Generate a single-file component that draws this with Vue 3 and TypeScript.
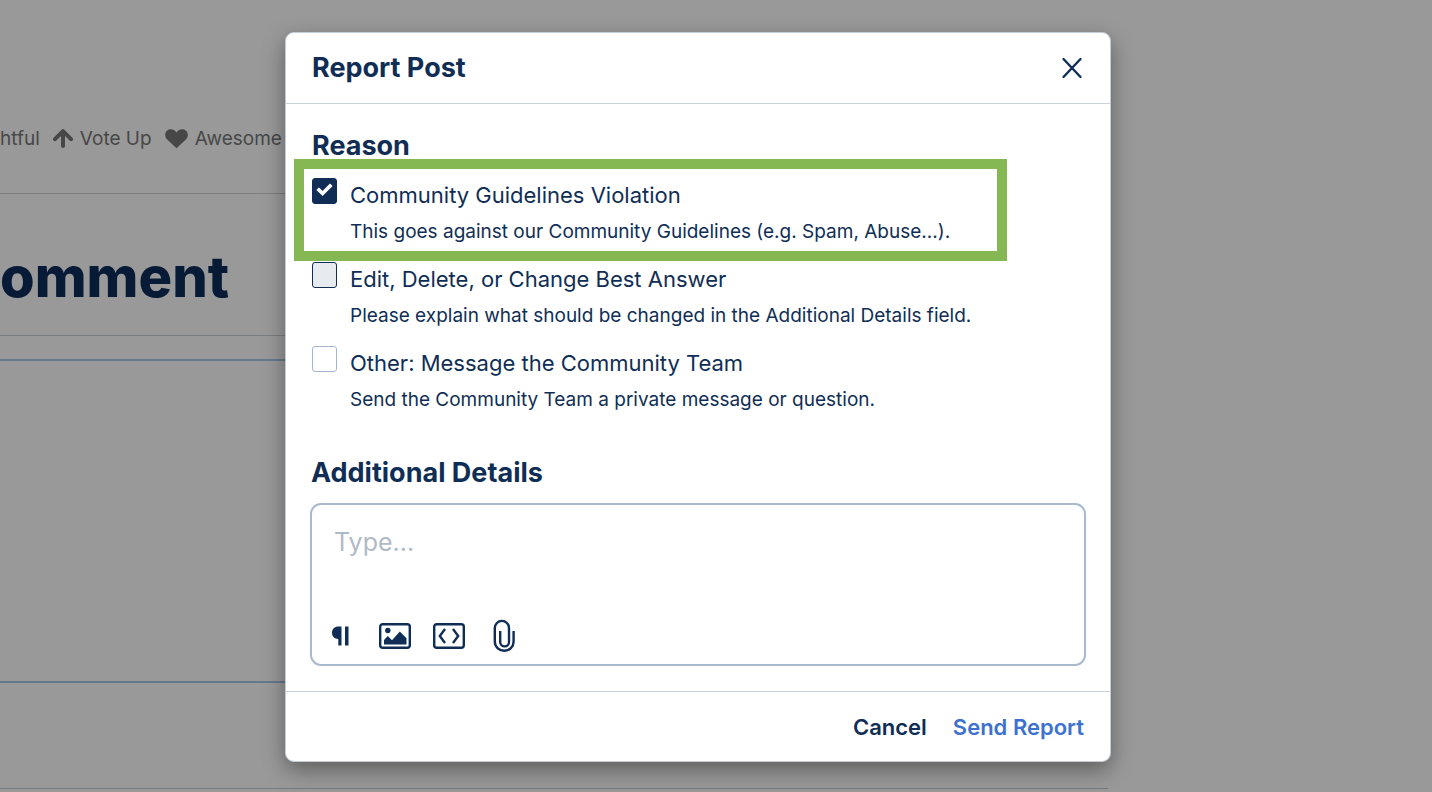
<script setup lang="ts">
import { ref } from 'vue'

interface ReportReason {
  id: string
  title: string
  detail: string
  checked: boolean
  hovered?: boolean
}

const reasons = ref<ReportReason[]>([
  {
    id: 'violation',
    title: 'Community Guidelines Violation',
    detail: 'This goes against our Community Guidelines (e.g. Spam, Abuse...).',
    checked: true,
  },
  {
    id: 'edit',
    title: 'Edit, Delete, or Change Best Answer',
    detail: 'Please explain what should be changed in the Additional Details field.',
    checked: false,
    hovered: true,
  },
  {
    id: 'other',
    title: 'Other: Message the Community Team',
    detail: 'Send the Community Team a private message or question.',
    checked: false,
  },
])

const details = ref('')
</script>

<template>
  <div class="screen">
    <main class="page">
      <div class="reactions">
        <span class="reaction">htful</span>
        <span class="reaction">
          <svg width="20" height="20" viewBox="0 0 20 20" aria-hidden="true">
            <path d="M2 10.2 10 2.2l8 8M10 3.5V17" fill="none" stroke="currentColor" stroke-width="4" stroke-linecap="round" stroke-linejoin="round" />
          </svg>
          Vote Up
        </span>
        <span class="reaction">
          <svg width="23" height="20" viewBox="0 0 23 20" aria-hidden="true">
            <path d="M11.5 19.3 1.9 10.2C-.5 7.7-.3 3.7 2 1.7 4.6-.4 8.2 0 10.4 2.300l1.100 1.200 1.100-1.200C14.800 0 18.400-.4 21 1.700c2.300 2 2.500 6 .1 8.500z" fill="currentColor" />
          </svg>
          Awesome
        </span>
      </div>
      <h1 class="comment-title">omment</h1>
      <div class="comment-box"></div>
      <div class="comment-end"></div>
    </main>

    <div class="overlay">
      <form class="dialog" role="dialog" aria-labelledby="report-title" @submit.prevent>
        <header class="dialog-header">
          <h2 id="report-title">Report Post</h2>
          <button type="button" class="close" aria-label="Close">
            <svg width="22" height="22" viewBox="0 0 22 22" aria-hidden="true">
              <path d="M2.500 2 19.500 20M19.500 2 2.500 20" fill="none" stroke="currentColor" stroke-width="2.400" stroke-linecap="round" />
            </svg>
          </button>
        </header>

        <div class="dialog-body">
          <fieldset>
            <legend>Reason</legend>
            <div class="options">
              <div v-for="reason in reasons" :key="reason.id" class="option">
                <span class="tick">
                  <input :id="reason.id" v-model="reason.checked" type="checkbox" :class="{ hovered: reason.hovered }" />
                  <svg v-if="reason.checked" width="17" height="14" viewBox="0 0 17 14" aria-hidden="true">
                    <path d="M3 7 6.600 10.500 14 3" fill="none" stroke="currentColor" stroke-width="3.700" stroke-linecap="square" />
                  </svg>
                </span>
                <label :for="reason.id">
                  <span class="option-title">{{ reason.title }}</span>
                  <span class="option-detail">{{ reason.detail }}</span>
                </label>
              </div>
              <div class="highlight"></div>
            </div>
          </fieldset>

          <label class="details-label" for="details">Additional Details</label>
          <div class="editor">
            <textarea id="details" v-model="details" placeholder="Type..."></textarea>
            <div class="tools">
              <button type="button" aria-label="Paragraph">
                <svg width="32" height="34" viewBox="0 0 32 34" aria-hidden="true">
                  <path d="M16.500 7.500v19h-3.200V20C9.500 20 7 17.500 7 13.800s2.500-6.300 6.500-6.300zM20 7.500h3.500v19H20z" fill="currentColor" />
                </svg>
              </button>
              <button type="button" aria-label="Image">
                <svg width="32" height="34" viewBox="0 0 32 34" aria-hidden="true">
                  <rect x="1.200" y="5.200" width="29.600" height="23.600" rx="2.500" fill="none" stroke="currentColor" stroke-width="2.400" />
                  <circle cx="8.800" cy="11.500" r="2.700" fill="currentColor" />
                  <path d="M5 25.500v-4.500L8.800 17l4.200 4.200 7.800-8.700 6.700 6.700v6.300z" fill="currentColor" />
                </svg>
              </button>
              <button type="button" aria-label="Code">
                <svg width="32" height="34" viewBox="0 0 32 34" aria-hidden="true">
                  <rect x="1.200" y="5.200" width="29.600" height="23.600" rx="2.500" fill="none" stroke="currentColor" stroke-width="2.400" />
                  <path d="M12 10 6.800 17l5.200 7M20 10 25.200 17 20 24" fill="none" stroke="currentColor" stroke-width="2.400" />
                </svg>
              </button>
              <button type="button" aria-label="Attach file">
                <svg width="32" height="34" viewBox="0 0 32 34" aria-hidden="true">
                  <path d="M13.200 12v11a4.400 4.400 0 0 0 8.800 0V9a7 7 0 0 0-14.200 0v13.400a9.400 9.400 0 0 0 18.800 0V12" fill="none" stroke="currentColor" stroke-width="2.400" />
                </svg>
              </button>
            </div>
          </div>
        </div>

        <footer class="dialog-footer">
          <button type="button">Cancel</button>
          <button type="submit" class="send">Send Report</button>
        </footer>
      </form>
    </div>
  </div>
</template>

<style>
body {
  margin: 0;
  background: #999;
}
</style>

<style scoped>
.screen {
  position: relative;
  min-height: 100vh;
  overflow: hidden;
  font-family: Inter, 'Liberation Sans', sans-serif;
  color: #102e55;
  background: #999;
}

* {
  box-sizing: border-box;
}

.page {
  width: 77.4%;
}

.reactions {
  display: flex;
  gap: 13px;
  height: 194px;
  padding-top: 124px;
  border-bottom: 1px solid #7b7e81;
  color: #474747;
  font-size: 19px;
  line-height: 30px;
}

.reaction {
  display: flex;
  align-items: center;
  gap: 7px;
  height: 30px;
}

.comment-title {
  height: 142px;
  margin: 0;
  padding-top: 50px;
  border-bottom: 1px solid #7b7e81;
  color: #081b36;
  font-size: 56px;
  font-weight: 800;
  line-height: 66px;
}

.comment-box {
  height: 324px;
  margin-top: 23px;
  border: 2px solid #65798d;
  border-left: 0;
}

.comment-end {
  height: 106px;
  border-bottom: 1px solid #737a82;
}

.overlay {
  position: absolute;
  inset: 0;
  display: flex;
  justify-content: center;
  align-items: flex-start;
  padding: 32px 36px 30px 0;
}

.dialog {
  width: 826px;
  max-width: 100%;
  border: 1px solid #c3cdd8;
  border-radius: 9px;
  background: #fff;
  box-shadow: 0 8px 22px rgba(0, 0, 0, 0.38);
}

.dialog-header {
  display: flex;
  justify-content: space-between;
  align-items: center;
  height: 71px;
  padding: 0 25px 0 26px;
  border-bottom: 1px solid #cbd2d9;
}

h2,
legend,
.details-label {
  margin: 0;
  padding: 0;
  font-size: 27px;
  font-weight: 700;
  line-height: 32px;
}

button {
  padding: 0;
  border: 0;
  background: none;
  color: inherit;
  font: inherit;
  cursor: pointer;
}

svg {
  display: block;
}

.close {
  padding: 2px;
}

.dialog-body {
  padding: 26px 24px 25px;
}

fieldset {
  min-width: 0;
  margin: 0;
  padding: 0 2px;
  border: 0;
}

.options {
  position: relative;
  display: flex;
  flex-direction: column;
  gap: 16px;
  padding-top: 16px;
}

.option {
  display: flex;
  gap: 13px;
}

.tick {
  position: relative;
  flex: none;
  width: 25px;
  height: 26px;
}

.tick input {
  display: block;
  width: 25px;
  height: 26px;
  margin: 0;
  appearance: none;
  border: 1px solid #a5b7ce;
  border-radius: 3px;
  background: #fff;
}

.tick input.hovered {
  border-color: #102e55;
  background: #e7eaef;
}

.tick input:checked {
  border-color: #102e55;
  background: #102e55;
}

.tick svg {
  position: absolute;
  top: 5px;
  left: 4px;
  color: #fff;
  pointer-events: none;
}

.option label {
  display: flex;
  flex-direction: column;
  gap: 8px;
  padding-top: 2px;
}

.option-title {
  font-size: 22px;
  line-height: 30px;
}

.option-detail {
  font-size: 19px;
  line-height: 28px;
}

.highlight {
  position: absolute;
  top: -3px;
  left: -18px;
  right: 77px;
  height: 102px;
  border: 10px solid #85b853;
  pointer-events: none;
}

.details-label {
  display: block;
  margin: 43px 1px 14px;
}

.editor {
  border: 2px solid #a9bacf;
  border-radius: 11px;
}

textarea {
  display: block;
  width: 100%;
  height: 112px;
  padding: 21px 22px 0;
  border: 0;
  outline: 0;
  background: transparent;
  color: inherit;
  font-family: inherit;
  font-size: 25px;
  line-height: 32px;
  resize: none;
}

textarea::placeholder {
  color: #b0bac6;
}

.tools {
  display: flex;
  gap: 22px;
  padding: 2px 13px 11px;
}

.dialog-footer {
  display: flex;
  justify-content: flex-end;
  gap: 26px;
  height: 70px;
  padding: 0 26px;
  border-top: 1px solid #cbd2d9;
  font-size: 22px;
  font-weight: 600;
}

.send {
  color: #3e71cf;
}
</style>
